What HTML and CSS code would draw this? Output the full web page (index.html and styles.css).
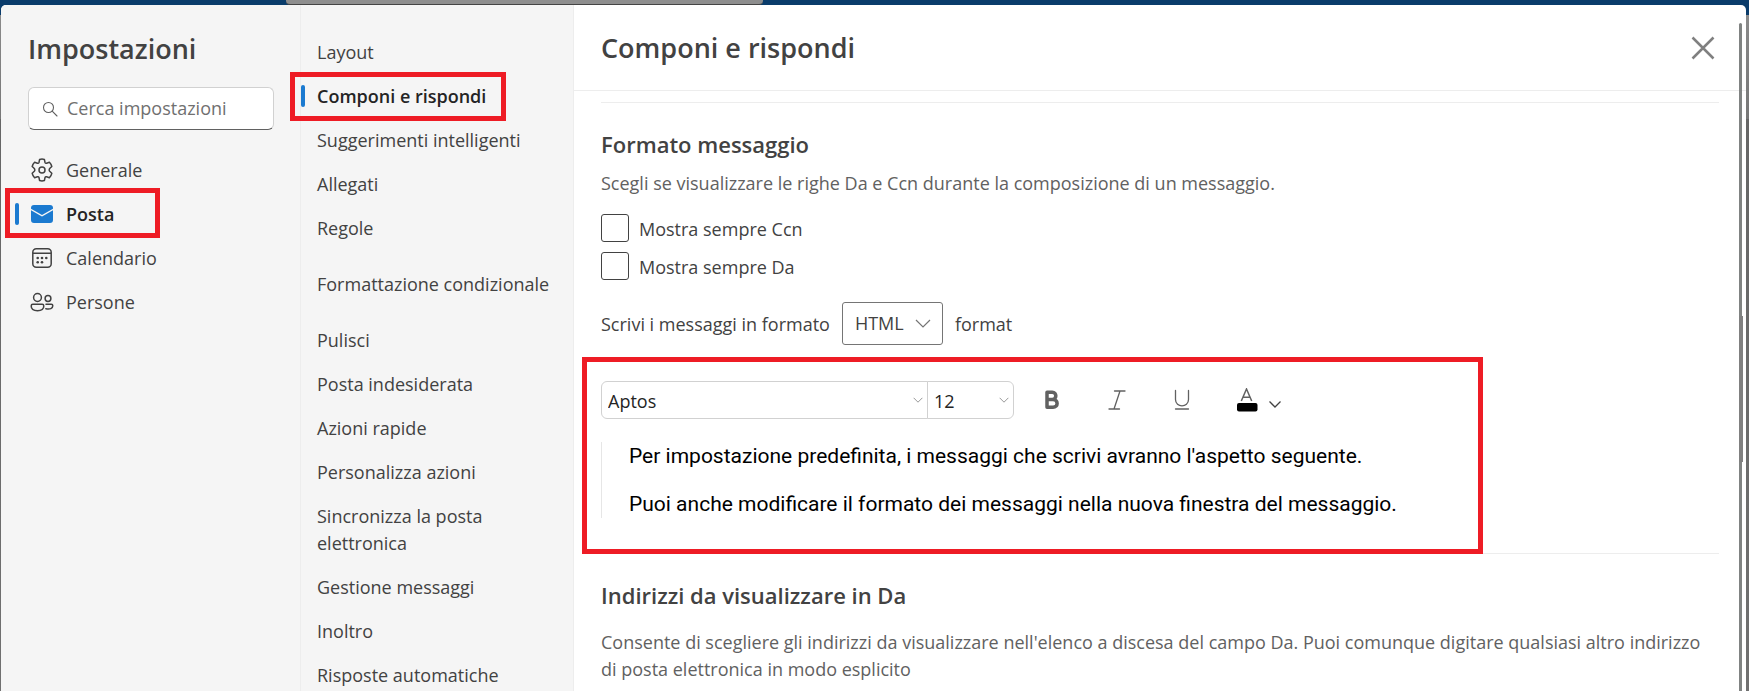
FILE: index.html
```html
<!DOCTYPE html>
<html lang="it">
<head>
  <meta charset="UTF-8" />
  <meta name="viewport" content="width=device-width, initial-scale=1.0" />
  <title>Impostazioni - Componi e rispondi</title>
  <link rel="stylesheet" href="styles.css">
</head>
<body>
  <div class="backdrop-search"></div>
  <div class="dialog">
    <aside class="rail">
      <h1>Impostazioni</h1>
      <label class="search">
        <svg width="16" height="16" viewBox="0 0 16 16" fill="none" stroke="#616161" stroke-width="1.1" stroke-linecap="round"><circle cx="6.5" cy="6.5" r="5"/><path d="M10.2 10.2L15 15"/></svg>
        <input type="search" placeholder="Cerca impostazioni" aria-label="Cerca impostazioni">
      </label>
      <nav class="rail-nav">
        <a href="#generale">
          <svg width="24" height="24" viewBox="0 0 24 24" fill="none" stroke="#424242" stroke-width="1.5" stroke-linejoin="round"><circle cx="12" cy="12" r="3"/><path d="M9.6 1.5Q12 .7 14.4 1.5L15 4.4Q15.4 5.5 16.6 5.2L19.4 4.3Q21.2 6 21.8 8.5L19.7 10.5Q18.7 12 19.7 13.3L21.8 15.3Q21.2 18 19.4 19.7L16.6 18.8Q15.4 18.5 15 19.6L14.4 22.5Q12 23.3 9.6 22.5L9 19.6Q8.6 18.5 7.4 18.8L4.6 19.7Q2.8 18 2.2 15.3L4.3 13.3Q5.3 12 4.3 10.5L2.2 8.5Q2.8 6 4.6 4.3L7.4 5.2Q8.6 5.5 9 4.4Z"/></svg>
          <span>Generale</span>
        </a>
        <a href="#posta" class="active marked">
          <svg width="24" height="24" viewBox="0 0 24 24"><path d="M1 8.3L11.5 14.3Q12 14.6 12.5 14.3L23 8.3V18Q23 21 20 21H4Q1 21 1 18Z" fill="#1b7ad0"/><path d="M4 3H20Q23 3 23 6V6.7L12 12.9L1 6.7V6Q1 3 4 3Z" fill="#1b7ad0"/></svg>
          <span>Posta</span>
        </a>
        <a href="#calendario">
          <svg width="24" height="24" viewBox="0 0 24 24" fill="none" stroke="#424242" stroke-width="1.5"><rect x="2.8" y="2.8" width="18.4" height="18.4" rx="3.5"/><path d="M3 7.3H21"/><g fill="#424242" stroke="none"><circle cx="7.7" cy="12" r="1.3"/><circle cx="12" cy="12" r="1.3"/><circle cx="16.3" cy="12" r="1.3"/><circle cx="7.7" cy="16.3" r="1.3"/><circle cx="12" cy="16.3" r="1.3"/></g></svg>
          <span>Calendario</span>
        </a>
        <a href="#persone">
          <svg width="24" height="24" viewBox="0 0 24 24" fill="none" stroke="#424242" stroke-width="1.5" stroke-linejoin="round"><circle cx="7.5" cy="7.5" r="3.9"/><circle cx="18" cy="8.5" r="2.9"/><path d="M2.8 14.3H12.2Q13.8 14.3 13.8 16C13.8 19 11 20.7 7.5 20.7S1.2 19 1.2 16Q1.2 14.3 2.8 14.3ZM16 14.3H21.3Q22.8 14.3 22.8 15.8C22.8 18.5 20 19.6 15.8 18.7" stroke-linecap="round"/></svg>
          <span>Persone</span>
        </a>
      </nav>
    </aside>

    <nav class="subnav">
      <a href="#layout">Layout</a>
      <a href="#componi" class="active marked">Componi e rispondi</a>
      <a href="#suggerimenti">Suggerimenti intelligenti</a>
      <a href="#allegati">Allegati</a>
      <a href="#regole">Regole</a>
      <a href="#formattazione" class="spaced">Formattazione condizionale</a>
      <a href="#pulisci">Pulisci</a>
      <a href="#indesiderata">Posta indesiderata</a>
      <a href="#azioni">Azioni rapide</a>
      <a href="#personalizza">Personalizza azioni</a>
      <a href="#sincronizza">Sincronizza la posta elettronica</a>
      <a href="#gestione">Gestione messaggi</a>
      <a href="#inoltro">Inoltro</a>
      <a href="#risposte">Risposte automatiche</a>
    </nav>

    <main>
      <header>
        <h2>Componi e rispondi</h2>
        <button type="button" class="close" aria-label="Chiudi">
          <svg width="24" height="24" viewBox="0 0 24 24" fill="none" stroke="#808080" stroke-width="2.5"><path d="M1.5 1.5L22.5 22.5M22.5 1.5L1.5 22.5"/></svg>
        </button>
      </header>

      <div class="content">
        <section>
          <h3>Formato messaggio</h3>
          <p class="hint">Scegli se visualizzare le righe Da e Ccn durante la composizione di un messaggio.</p>
          <div class="checks">
            <label><input type="checkbox"><span>Mostra sempre Ccn</span></label>
            <label><input type="checkbox"><span>Mostra sempre Da</span></label>
          </div>
          <div class="format-row">
            <label for="format">Scrivi i messaggi in formato</label>
            <select id="format"><option>HTML</option><option>Testo normale</option></select>
            <span>format</span>
          </div>
          <div class="editor marked">
            <div class="toolbar">
              <div class="fonts">
                <select class="font-name" aria-label="Tipo di carattere"><option>Aptos</option></select>
                <select class="font-size" aria-label="Dimensione carattere"><option>12</option></select>
              </div>
              <button type="button" aria-label="Grassetto"><svg width="24" height="24" viewBox="0 0 24 24" fill="none" stroke="#616161" stroke-width="3.5" stroke-linejoin="round"><path d="M7 4.200H12.3C17 4.200 17 11.5 12.3 11.5H7ZM7 11.5H13C18.5 11.5 18.5 19.3 13 19.3H7ZM7 4.2V19.3"/></svg></button>
              <button type="button" aria-label="Corsivo"><svg width="24" height="24" viewBox="0 0 24 24" fill="none" stroke="#616161" stroke-width="1.3" stroke-linecap="round"><path d="M9.5 3H20M4 21H14.5M15 3L9 21"/></svg></button>
              <button type="button" aria-label="Sottolineato"><svg width="24" height="24" viewBox="0 0 24 24" fill="none" stroke="#616161" stroke-width="1.3" stroke-linecap="round"><path d="M5.5 2.5V11.5C5.5 20 18.5 20 18.5 11.5V2.5M5.5 21H18.5"/></svg></button>
              <button type="button" class="color" aria-label="Colore carattere">
                <svg width="24" height="24" viewBox="0 0 24 24" fill="none"><path d="M6.300 13L11.5 1L16.7 13M8 9.3H15" stroke="#616161" stroke-width="1.5"/><rect x="2" y="15" width="20.5" height="8.5" rx="2" fill="#000"/></svg>
                <svg width="14" height="24" viewBox="0 0 14 24" fill="none" stroke="#424242" stroke-width="1.3"><path d="M1.5 13.5L7 19L12.5 13.5"/></svg>
              </button>
            </div>
            <div class="preview">
              <p>Per impostazione predefinita, i messaggi che scrivi avranno l'aspetto seguente.</p>
              <p>Puoi anche modificare il formato dei messaggi nella nuova finestra del messaggio.</p>
            </div>
          </div>
        </section>

        <section>
          <h3>Indirizzi da visualizzare in Da</h3>
          <p class="hint spaced-hint">Consente di scegliere gli indirizzi da visualizzare nell'elenco a discesa del campo Da. Puoi comunque digitare qualsiasi altro indirizzo di posta elettronica in modo esplicito</p>
        </section>
      </div>
      <div class="scrollbar"></div>
    </main>
  </div>
</body>
</html>
```

FILE: styles.css
```css
* {
  box-sizing: border-box;
}
html, body {
  margin: 0;
  height: 100%;
  overflow: hidden;
}
body {
  padding: 5px 3px 0 1px;
  font-family: "Open Sans", "Segoe UI", sans-serif;
  font-size: 18px;
  line-height: 27px;
  color: #424242;
  background: linear-gradient(#0a3c6b 15px, #8a8a8a 15px, #777 119px, #666 119px, #707070);
}
h1, h2, h3, p {
  margin: 0;
}
h1, h2 {
  font-size: 27px;
  line-height: 36px;
  font-weight: 600;
}
h3 {
  font-size: 22px;
  line-height: 28px;
  font-weight: 600;
}
a {
  color: inherit;
  text-decoration: none;
}
button {
  display: flex;
  padding: 0;
  border: 0;
  background: none;
}
input, select {
  font: inherit;
  color: inherit;
}
svg {
  flex: none;
}

/* top bar behind the dialog */
.backdrop-search {
  position: absolute;
  top: 0;
  left: 286px;
  width: 477px;
  height: 5px;
  background: #8e8e8e;
  border-bottom: 1px solid #444;
  border-radius: 0 0 4px 4px;
}

.dialog {
  position: relative;
  display: grid;
  grid-template-columns: 299px 274px 1fr;
  height: 100%;
  overflow: hidden;
  background: #fff;
  border-radius: 5px 5px 0 0;
}

.rail {
  padding: 26px 26px 0 27px;
  background: #f5f5f5;
}
.search {
  display: flex;
  align-items: center;
  gap: 9px;
  height: 43px;
  margin-top: 20px;
  padding: 0 13px;
  background: #fff;
  border: 1px solid #d1d1d1;
  border-bottom-color: #616161;
  border-radius: 6px;
}
.search input {
  flex: 1;
  min-width: 0;
  padding: 0;
  border: 0;
  outline: 0;
  background: none;
}
.search input::placeholder {
  color: #707070;
  opacity: 1;
}
.rail-nav {
  margin-top: 18px;
}
.rail-nav a {
  position: relative;
  display: flex;
  align-items: center;
  gap: 12px;
  height: 44px;
  padding-left: 2px;
}

.subnav {
  padding: 25px 16px 0;
  background: #f5f5f5;
  border-left: 1px solid #ededed;
  border-right: 1px solid #ededed;
}
.subnav a {
  position: relative;
  display: block;
  padding: 9px 0 8px;
}
.subnav .spaced {
  margin: 12px 0;
  white-space: nowrap;
}

.active {
  font-weight: 600;
  color: #242424;
}
.active::before {
  content: "";
  position: absolute;
  top: 11px;
  left: -16px;
  width: 4px;
  height: 22px;
  border-radius: 2px;
  background: #1b7ad0;
}
.rail-nav .active::before {
  left: -13px;
}

/* red highlight frames */
.marked {
  position: relative;
}
.marked::after {
  content: "";
  position: absolute;
  border: 5px solid #ee1c25;
  pointer-events: none;
}
.rail-nav .marked::after {
  inset: -4px 114px -2px -23px;
}
.subnav .marked::after {
  inset: -2px 51px -3px -27px;
}
.editor.marked::after {
  inset: -24px 236px -36px -19px;
}

main {
  position: relative;
  display: flex;
  flex-direction: column;
  min-width: 0;
}
header {
  display: flex;
  align-items: center;
  justify-content: space-between;
  height: 86px;
  padding: 0 31px 0 27px;
  border-bottom: 1px solid #ededed;
}
.content {
  flex: 1;
  min-height: 0;
  overflow: hidden;
  padding: 11px 27px 0;
}
section {
  padding-top: 27px;
  border-top: 1px solid #ededed;
}
.hint {
  margin-top: 12px;
  color: #616161;
}
.spaced-hint {
  margin-top: 20px;
}

.checks {
  display: flex;
  flex-direction: column;
  gap: 10px;
  margin-top: 17px;
}
.checks label {
  display: flex;
  align-items: center;
  gap: 10px;
  height: 28px;
}
.checks span {
  padding-top: 2px;
}
.checks input {
  appearance: none;
  width: 28px;
  height: 28px;
  margin: 0;
  border: 1px solid #424242;
  border-radius: 3px;
}

.format-row {
  display: flex;
  align-items: center;
  gap: 12px;
  margin-top: 22px;
}
.format-row label,
.format-row span {
  padding-top: 2px;
}
select {
  appearance: none;
  padding: 0 10px;
  border: 1px solid #d1d1d1;
  background: #fff url("data:image/svg+xml,%3Csvg xmlns='http://www.w3.org/2000/svg' viewBox='0 0 16 9' fill='none' stroke='%23757575' stroke-width='1.2'%3E%3Cpath d='M1 1l7 7 7-7'/%3E%3C/svg%3E") no-repeat right 11px center / 16px 9px;
}
#format {
  width: 101px;
  height: 43px;
  padding-left: 12px;
  border-color: #757575;
  border-radius: 3px;
}

.editor {
  margin-top: 36px;
  margin-bottom: 35px;
}
.toolbar {
  display: flex;
  align-items: center;
}
.fonts {
  display: flex;
  margin-right: 26px;
  color: #242424;
}
.fonts select {
  height: 38px;
  padding-top: 2px;
  padding-left: 6px;
  background-position: right 4px center;
  background-size: 10px 6px;
}
.font-name {
  width: 327px;
  border-radius: 6px 0 0 6px;
}
.font-size {
  width: 87px;
  margin-left: -1px;
  border-radius: 0 6px 6px 0;
}
.toolbar button {
  margin-right: 41px;
}
.toolbar .color {
  gap: 9px;
}
.preview {
  margin-top: 23px;
  padding-left: 27px;
  border-left: 1px solid #e6e6e6;
  font-family: Roboto, "Liberation Sans", sans-serif;
  font-size: 21px;
  line-height: 28px;
  color: #000;
}
.preview p + p {
  margin-top: 20px;
}

.scrollbar {
  position: absolute;
  top: 18px;
  right: 4px;
  bottom: 0;
  width: 3px;
  border-radius: 2px 2px 0 0;
  background: #808382;
}
.scrollbar::after {
  content: "";
  position: absolute;
  top: 293px;
  left: 0;
  width: 4px;
  height: 146px;
  background: #808080;
}
```
